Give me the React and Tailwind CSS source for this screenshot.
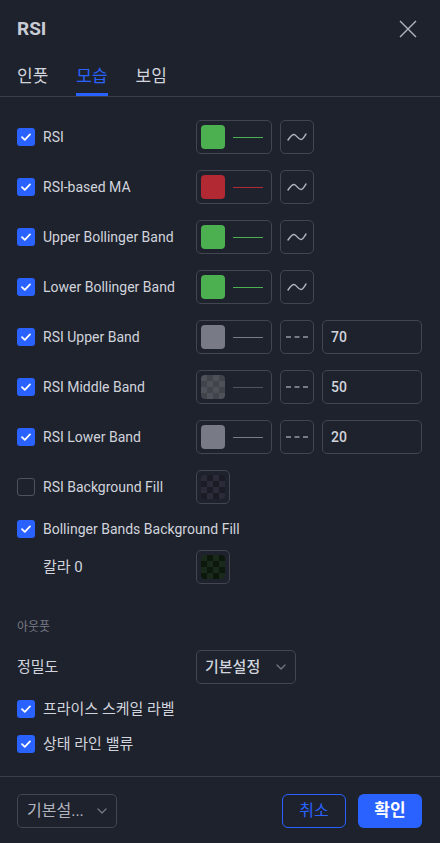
import React from "react";

const FONT = { fontFamily: 'Roboto, "Noto Sans CJK KR", sans-serif' };

function Check({ checked = true }) {
  if (!checked)
    return <div className="w-[18px] h-[18px] rounded-[3px] border border-[#50535e] shrink-0" />;
  return (
    <div className="w-[18px] h-[18px] rounded-[3px] bg-[#2962ff] flex items-center justify-center shrink-0">
      <svg width="12" height="10" viewBox="0 0 12 10" fill="none">
        <path d="M2 5.2 L4.8 7.8 L10 2.4" stroke="#fff" strokeWidth="1.8" strokeLinecap="round" strokeLinejoin="round" />
      </svg>
    </div>
  );
}

function Checker({ a, b }) {
  const cells = [];
  for (let r = 0; r < 4; r++)
    for (let c = 0; c < 4; c++)
      cells.push(<div key={r * 4 + c} style={{ background: (r + c) % 2 === 0 ? a : b }} />);
  return <div className="w-[24px] h-[24px] rounded-[4px] overflow-hidden grid grid-cols-4 grid-rows-4">{cells}</div>;
}

function ColorBox({ color, checker, line }) {
  return (
    <div className="w-[76px] h-[34px] rounded-[5px] border border-[#434651] flex items-center pl-[4px] gap-[8px]">
      {checker ? <Checker a={checker[0]} b={checker[1]} /> : <div className="w-[24px] h-[24px] rounded-[4px]" style={{ background: color }} />}
      <div className="w-[30px] h-px" style={{ background: line }} />
    </div>
  );
}

function WaveBtn() {
  return (
    <div className="w-[34px] h-[34px] rounded-[5px] border border-[#434651] flex items-center justify-center">
      <svg width="20" height="10" viewBox="0 0 20 10" fill="none">
        <path d="M1 8 C3 5 5 2.5 7 2.5 C9.5 2.5 11 7.5 14 7.5 C16 7.5 17.5 4 19 2" stroke="#b2b5be" strokeWidth="1.4" strokeLinecap="round" />
      </svg>
    </div>
  );
}

function DashBtn() {
  return (
    <div className="w-[34px] h-[34px] rounded-[5px] border border-[#434651] flex items-center justify-center">
      <svg width="22" height="4" viewBox="0 0 22 4" fill="none">
        <path d="M0 2 H5 M8.5 2 H13.5 M17 2 H22" stroke="#d1d4dc" strokeWidth="1.2" />
      </svg>
    </div>
  );
}

function Input({ value }) {
  return (
    <div className="w-[100px] h-[34px] rounded-[5px] border border-[#434651] flex items-center pl-[8px] text-[14px] font-medium text-[#d1d4dc]">
      {value}
    </div>
  );
}

function Chevron() {
  return (
    <svg width="10" height="6" viewBox="0 0 10 6" fill="none">
      <path d="M1 1 L5 5 L9 1" stroke="#787b86" strokeWidth="1.2" strokeLinecap="round" strokeLinejoin="round" />
    </svg>
  );
}

function Row({ label, checked = true, children }) {
  return (
    <div className="flex items-center h-[34px]">
      <div className="w-[179px] flex items-center gap-[8px]">
        <Check checked={checked} />
        <span className="text-[14px] text-[#d1d4dc] whitespace-nowrap">{label}</span>
      </div>
      <div className="flex items-center gap-[8px]">{children}</div>
    </div>
  );
}

export default function App() {
  return (
    <div style={FONT} className="w-[440px] h-[843px] bg-[#1e222d] flex flex-col overflow-hidden">
      <div className="h-[57px] px-[17px] flex items-center justify-between">
        <span className="text-[19px] font-bold text-[#c9ccd4] leading-[26px] pt-[1px]">RSI</span>
        <svg width="18" height="18" viewBox="0 0 18 18" fill="none" className="mr-[6px]">
          <path d="M1 1 L17 17 M17 1 L1 17" stroke="#b2b5be" strokeWidth="1.4" />
        </svg>
      </div>
      <div className="h-[40px] border-b border-[#3a3e4a] px-[17px] flex gap-[28px] text-[17px]">
        <div className="relative h-full flex items-center text-[#d1d4dc]">인풋</div>
        <div className="relative h-full flex items-center text-[#2962ff]">
          모습
          <span className="absolute left-0 right-0 bottom-0 h-[3px] bg-[#2962ff]" />
        </div>
        <div className="relative h-full flex items-center text-[#d1d4dc]">보임</div>
      </div>

      <div className="flex-1 px-[17px] pt-[23px] flex flex-col">
        <div className="flex flex-col gap-[16px]">
          <Row label="RSI">
            <ColorBox color="#4caf50" line="#4caf50" />
            <WaveBtn />
          </Row>
          <Row label="RSI-based MA">
            <ColorBox color="#b22833" line="#b22833" />
            <WaveBtn />
          </Row>
          <Row label="Upper Bollinger Band">
            <ColorBox color="#4caf50" line="#4caf50" />
            <WaveBtn />
          </Row>
          <Row label="Lower Bollinger Band">
            <ColorBox color="#4caf50" line="#4caf50" />
            <WaveBtn />
          </Row>
          <Row label="RSI Upper Band">
            <ColorBox color="#787b86" line="#787b86" />
            <DashBtn />
            <Input value="70" />
          </Row>
          <Row label="RSI Middle Band">
            <ColorBox checker={["#4f5159", "#42444c"]} line="#50535b" />
            <DashBtn />
            <Input value="50" />
          </Row>
          <Row label="RSI Lower Band">
            <ColorBox color="#787b86" line="#787b86" />
            <DashBtn />
            <Input value="20" />
          </Row>
          <Row label="RSI Background Fill" checked={false}>
            <div className="w-[34px] h-[34px] rounded-[5px] border border-[#434651] flex items-center justify-center">
              <Checker a="#2a2a38" b="#1b1b26" />
            </div>
          </Row>
          <div className="flex items-center gap-[8px] h-[18px]">
            <Check />
            <span className="text-[14px] text-[#d1d4dc] whitespace-nowrap">Bollinger Bands Background Fill</span>
          </div>
        </div>
        <div className="flex items-center h-[34px] mt-[12px]">
          <span className="w-[179px] pl-[26px] text-[15px] text-[#d1d4dc]">칼라 0</span>
          <div className="w-[34px] h-[34px] rounded-[5px] border border-[#434651] flex items-center justify-center">
            <Checker a="#1a2a1a" b="#0c180c" />
          </div>
        </div>

        <div className="mt-[35px] h-[16px] flex items-center text-[12px] text-[#787b86]">아웃풋</div>

        <div className="mt-[15px] flex items-center h-[34px]">
          <span className="w-[179px] text-[15px] text-[#d1d4dc]">정밀도</span>
          <div className="w-[100px] h-[34px] rounded-[5px] border border-[#434651] flex items-center justify-between pl-[8px] pr-[9px]">
            <span className="text-[15px] font-medium text-[#d1d4dc]">기본설정</span>
            <Chevron />
          </div>
        </div>

        <div className="mt-[15px] flex items-center gap-[8px] h-[20px]">
          <Check />
          <span className="text-[15px] text-[#d1d4dc]">프라이스 스케일 라벨</span>
        </div>
        <div className="mt-[15px] flex items-center gap-[8px] h-[20px]">
          <Check />
          <span className="text-[15px] text-[#d1d4dc]">상태 라인 밸류</span>
        </div>
      </div>

      <div className="h-[67px] border-t border-[#3a3e4a] px-[17px] pt-[17px] flex justify-between items-start">
        <div className="w-[100px] h-[34px] rounded-[5px] border border-[#434651] flex items-center justify-between pl-[9px] pr-[9px]">
          <span className="text-[16px] text-[#b2b5be]">기본설...</span>
          <Chevron />
        </div>
        <div className="flex gap-[12px] pr-[1px]">
          <div className="w-[64px] h-[34px] rounded-[6px] border border-[#2962ff] flex items-center justify-center text-[16px] text-[#2962ff]">
            취소
          </div>
          <div className="w-[64px] h-[34px] rounded-[6px] bg-[#2962ff] flex items-center justify-center text-[17px] font-semibold text-white">
            확인
          </div>
        </div>
      </div>
    </div>
  );
}
